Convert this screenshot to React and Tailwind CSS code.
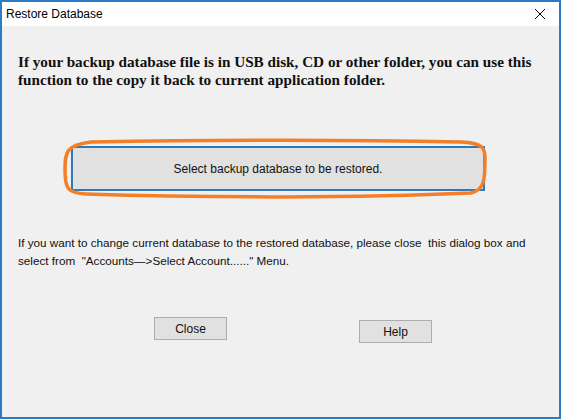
import React from 'react';

const App = () => {
  return (
    <div className="w-[561px] h-[419px] border-2 border-[#2b7cc4] bg-[#f0f0f0] flex flex-col overflow-hidden" style={{ fontFamily: '"Liberation Sans", Arial, sans-serif' }}>
      {/* Title bar */}
      <div className="h-[24px] bg-white flex items-center justify-between pl-[4px] pr-[13px] shrink-0">
        <span className="text-[12px] text-black -mt-[1px]">Restore Database</span>
        <svg width="12" height="12" viewBox="0 0 12 12">
          <path d="M1 1L11 11M11 1L1 11" stroke="#000" strokeWidth="1" />
        </svg>
      </div>

      {/* Body */}
      <div className="flex-1 flex flex-col px-[16px]">
        <p className="mt-[27px] text-[15.2px] font-bold leading-[18px] text-[#111]" style={{ fontFamily: '"Liberation Serif", "Times New Roman", serif' }}>
          If your backup database file is in USB disk, CD or other folder, you can use this function to the copy it back to current application folder.
        </p>

        <div className="relative mt-[57px] ml-[53px] w-[414px]">
          <button className="w-full h-[45px] bg-[#e1e1e1] border-2 border-[#2d79c0] text-[12px] text-[#111]">
            Select backup database to be restored.
          </button>
          {/* Orange annotation */}
          <svg className="absolute -left-[10px] -top-[8px] pointer-events-none" width="432" height="62" viewBox="0 0 432 62">
            <path
              d="M30 4 C 150 2, 300 2, 400 4 C 422 5, 424 10, 424 20 C 424 40, 424 52, 410 55 C 300 60, 150 60, 25 56 C 6 55, 4 50, 4 32 C 4 14, 5 7, 30 4 Z"
              fill="none"
              stroke="#f47f2a"
              strokeWidth="3.5"
            />
          </svg>
        </div>

        <p className="mt-[43px] text-[11.7px] leading-[18px] text-[#111]">
          If you want to change current database to the restored database, please close&nbsp; this dialog box and select from&nbsp; "Accounts—&gt;Select Account......" Menu.
        </p>

        <div className="relative mt-[47px] h-[30px]">
          <button className="absolute left-[136px] top-0 w-[73px] h-[23px] bg-[#e1e1e1] border border-[#adadad] text-[12px] text-[#111]">
            Close
          </button>
          <button className="absolute left-[341px] top-[3px] w-[73px] h-[23px] bg-[#e1e1e1] border border-[#adadad] text-[12px] text-[#111]">
            Help
          </button>
        </div>
      </div>
    </div>
  );
};

export default App;
